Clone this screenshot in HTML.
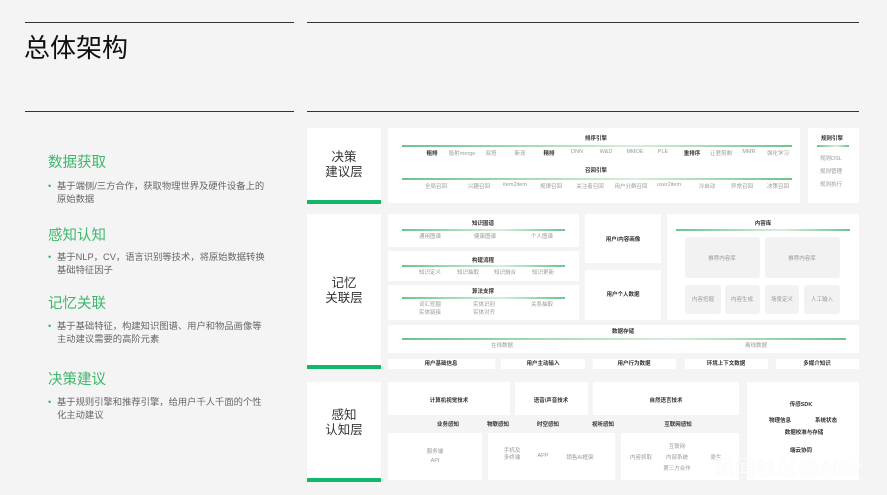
<!DOCTYPE html>
<html><head><meta charset="utf-8"><style>
*{margin:0;padding:0;box-sizing:border-box}
body{width:887px;height:495px;background:#f4f4f4;position:relative;overflow:hidden;font-family:"Liberation Sans","Noto Sans CJK SC",sans-serif}
.a{position:absolute}
.c{position:absolute;background:#fff}
.t{position:absolute;font-size:5.5px;color:#999;white-space:nowrap;transform:translateX(-50%)}
.b{color:#333;font-weight:bold}
.ln{position:absolute;height:1.5px;background:linear-gradient(90deg,#6cc48a,#d6efdd 60%,#6cc48a)}
.lab{position:absolute;background:#fff;text-align:center;font-size:12.5px;line-height:15px;color:#333}
.lab i{position:absolute;left:0;right:0;bottom:0;height:4px;background:#12b76a}
.g{position:absolute;background:#f2f2f2;border-radius:3px}
h2{position:absolute;left:48px;font-size:14.5px;font-weight:normal;color:#3cb86a}
.p{position:absolute;left:48px;width:240px;font-size:9.3px;line-height:12.5px;color:#666;padding-left:9px;white-space:nowrap}
.p:before{content:"•";position:absolute;left:0;color:#3cb86a}
</style></head><body>
<div class="a" style="left:25px;top:22px;width:269px;height:1px;background:#333"></div>
<div class="a" style="left:25px;top:111px;width:269px;height:1px;background:#333"></div>
<div class="a" style="left:307px;top:22px;width:552px;height:1px;background:#333"></div>
<div class="a" style="left:307px;top:111px;width:552px;height:1px;background:#333"></div>
<div class="a" style="left:24px;top:28px;font-size:26px;color:#111">总体架构</div>

<h2 style="top:151px">数据获取</h2>
<div class="p" style="top:180px">基于端侧/三方合作，获取物理世界及硬件设备上的<br>原始数据</div>
<h2 style="top:224px">感知认知</h2>
<div class="p" style="top:251px">基于NLP，CV，语言识别等技术，将原始数据转换<br>基础特征因子</div>
<h2 style="top:292px">记忆关联</h2>
<div class="p" style="top:320px">基于基础特征，构建知识图谱、用户和物品画像等<br>主动建议需要的高阶元素</div>
<h2 style="top:368px">决策建议</h2>
<div class="p" style="top:396px">基于规则引擎和推荐引擎，给用户千人千面的个性<br>化主动建议</div>

<!-- decision -->
<div class="lab" style="left:307px;top:128px;width:74px;height:76px;padding-top:22px">决策<br>建议层<i></i></div>
<div class="c" style="left:388px;top:128px;width:412px;height:75px"></div>
<div class="t b" style="left:596px;top:134px">排序引擎</div>
<div class="ln" style="left:402px;top:145px;width:390px"></div>
<div class="t b" style="left:432px;top:149px">粗排</div>
<div class="t" style="left:462px;top:149px">投射merge</div>
<div class="t" style="left:491px;top:149px">双塔</div>
<div class="t" style="left:520px;top:149px">新宠</div>
<div class="t b" style="left:549px;top:149px">精排</div>
<div class="t" style="left:577px;top:149px">DNN</div>
<div class="t" style="left:606px;top:149px">W&amp;D</div>
<div class="t" style="left:635px;top:149px">MMOE</div>
<div class="t" style="left:663px;top:149px">PLE</div>
<div class="t b" style="left:692px;top:149px">重排序</div>
<div class="t" style="left:721px;top:149px">让君剪剩</div>
<div class="t" style="left:749px;top:149px">MMR</div>
<div class="t" style="left:778px;top:149px">强化学习</div>
<div class="t b" style="left:596px;top:166px">召回引擎</div>
<div class="ln" style="left:402px;top:178px;width:390px"></div>
<div class="t" style="left:436px;top:182px">全局召回</div>
<div class="t" style="left:479px;top:182px">兴趣召回</div>
<div class="t" style="left:515px;top:182px">item2item</div>
<div class="t" style="left:551px;top:182px">规律召回</div>
<div class="t" style="left:590px;top:182px">关注者召回</div>
<div class="t" style="left:631px;top:182px">用户分群召回</div>
<div class="t" style="left:669px;top:182px">user2item</div>
<div class="t" style="left:707px;top:182px">冷启动</div>
<div class="t" style="left:742px;top:182px">异常召回</div>
<div class="t" style="left:778px;top:182px">决策召回</div>
<div class="c" style="left:808px;top:128px;width:51px;height:75px"></div>
<div class="t b" style="left:832px;top:134px">规则引擎</div>
<div class="ln" style="left:817px;top:145px;width:32px"></div>
<div class="t" style="left:831px;top:154px">规则DSL</div>
<div class="t" style="left:831px;top:167px">规则管理</div>
<div class="t" style="left:831px;top:180px">规则执行</div>

<!-- memory -->
<div class="lab" style="left:307px;top:214px;width:74px;height:155px;padding-top:62px">记忆<br>关联层<i></i></div>
<div class="c" style="left:388px;top:214px;width:191px;height:33px"></div>
<div class="t b" style="left:483px;top:219px">知识图谱</div>
<div class="ln" style="left:402px;top:229px;width:163px"></div>
<div class="t" style="left:430px;top:232px">通用图谱</div>
<div class="t" style="left:485px;top:232px">健康图谱</div>
<div class="t" style="left:542px;top:232px">个人图谱</div>
<div class="c" style="left:388px;top:251px;width:191px;height:30px"></div>
<div class="t b" style="left:483px;top:256px">构建流程</div>
<div class="ln" style="left:402px;top:265px;width:163px"></div>
<div class="t" style="left:430px;top:268px">知识定义</div>
<div class="t" style="left:468px;top:268px">知识抽取</div>
<div class="t" style="left:505px;top:268px">知识融合</div>
<div class="t" style="left:543px;top:268px">知识更新</div>
<div class="c" style="left:388px;top:285px;width:191px;height:35px"></div>
<div class="t b" style="left:483px;top:287px">算法支撑</div>
<div class="ln" style="left:402px;top:297px;width:163px"></div>
<div class="t" style="left:430px;top:300px">词汇挖掘</div>
<div class="t" style="left:484px;top:300px">实体识别</div>
<div class="t" style="left:542px;top:300px">关系抽取</div>
<div class="t" style="left:430px;top:308px">实体链接</div>
<div class="t" style="left:484px;top:308px">实体对齐</div>
<div class="c" style="left:585px;top:214px;width:76px;height:49px"></div>
<div class="t b" style="left:623px;top:235px">用户/内容画像</div>
<div class="c" style="left:585px;top:270px;width:76px;height:50px"></div>
<div class="t b" style="left:623px;top:290px">用户个人数据</div>
<div class="c" style="left:667px;top:214px;width:192px;height:106px"></div>
<div class="t b" style="left:763px;top:219px">内容库</div>
<div class="ln" style="left:676px;top:229px;width:174px"></div>
<div class="g" style="left:685px;top:237px;width:75px;height:41px"></div>
<div class="g" style="left:765px;top:237px;width:75px;height:41px"></div>
<div class="t" style="left:722px;top:254px">推荐内容库</div>
<div class="t" style="left:802px;top:254px">推荐内容库</div>
<div class="g" style="left:685px;top:285px;width:36px;height:29px"></div>
<div class="g" style="left:725px;top:285px;width:35px;height:29px"></div>
<div class="g" style="left:765px;top:285px;width:34px;height:29px"></div>
<div class="g" style="left:804px;top:285px;width:36px;height:29px"></div>
<div class="t" style="left:703px;top:295px">内容挖掘</div>
<div class="t" style="left:742px;top:295px">内容生成</div>
<div class="t" style="left:782px;top:295px">场景定义</div>
<div class="t" style="left:822px;top:295px">人工输入</div>
<div class="c" style="left:388px;top:325px;width:471px;height:28px"></div>
<div class="t b" style="left:623px;top:327px">数据存储</div>
<div class="ln" style="left:402px;top:338px;width:444px"></div>
<div class="t" style="left:502px;top:341px">在线数据</div>
<div class="t" style="left:756px;top:341px">离线数据</div>
<div class="c" style="left:388px;top:359px;width:107px;height:10px"></div>
<div class="c" style="left:501px;top:359px;width:84px;height:10px"></div>
<div class="c" style="left:593px;top:359px;width:83px;height:10px"></div>
<div class="c" style="left:685px;top:359px;width:83px;height:10px"></div>
<div class="c" style="left:776px;top:359px;width:83px;height:10px"></div>
<div class="t b" style="left:441px;top:359px">用户基础信息</div>
<div class="t b" style="left:543px;top:359px">用户主动输入</div>
<div class="t b" style="left:634px;top:359px">用户行为数据</div>
<div class="t b" style="left:726px;top:359px">环境上下文数据</div>
<div class="t b" style="left:817px;top:359px">多媒介知识</div>

<!-- perception -->
<div class="lab" style="left:307px;top:382px;width:74px;height:100px;padding-top:26px">感知<br>认知层<i></i></div>
<div class="c" style="left:388px;top:382px;width:122px;height:33px"></div>
<div class="t b" style="left:449px;top:396px">计算机视觉技术</div>
<div class="c" style="left:515px;top:382px;width:73px;height:33px"></div>
<div class="t b" style="left:551px;top:396px">语音/声音技术</div>
<div class="c" style="left:593px;top:382px;width:146px;height:33px"></div>
<div class="t b" style="left:666px;top:396px">自然语言技术</div>
<div class="t b" style="left:448px;top:420px">业务感知</div>
<div class="t b" style="left:498px;top:420px">物联感知</div>
<div class="t b" style="left:548px;top:420px">时空感知</div>
<div class="t b" style="left:603px;top:420px">视听感知</div>
<div class="t b" style="left:678px;top:420px">互联网感知</div>
<div class="c" style="left:388px;top:433px;width:94px;height:47px"></div>
<div class="t" style="left:435px;top:447px">服务端</div>
<div class="t" style="left:435px;top:458px">API</div>
<div class="c" style="left:488px;top:433px;width:127px;height:47px"></div>
<div class="t" style="left:512px;top:446px">手机及</div>
<div class="t" style="left:512px;top:453px">多终端</div>
<div class="t" style="left:543px;top:453px">APP</div>
<div class="t" style="left:580px;top:453px">销售AI框架</div>
<div class="c" style="left:621px;top:433px;width:118px;height:47px"></div>
<div class="t" style="left:641px;top:453px">内容抓取</div>
<div class="t" style="left:677px;top:442px">互联网</div>
<div class="t" style="left:677px;top:453px">内部系统</div>
<div class="t" style="left:677px;top:464px">第三方合作</div>
<div class="t" style="left:716px;top:453px">原生</div>
<div class="c" style="left:747px;top:382px;width:112px;height:98px"></div>
<div class="t b" style="left:801px;top:400px">传感SDK</div>
<div class="t b" style="left:780px;top:416px">物理信息</div>
<div class="t b" style="left:826px;top:416px">系统状态</div>
<div class="t b" style="left:804px;top:428px">数据校准与存储</div>
<div class="t b" style="left:801px;top:446px">端云协同</div>

<div class="a" style="left:714px;top:452px;font-size:21px;color:rgba(255,255,255,.95);white-space:nowrap;text-shadow:0 0 1px rgba(200,200,200,.4)">风闻社区@Alter</div>
</body></html>
